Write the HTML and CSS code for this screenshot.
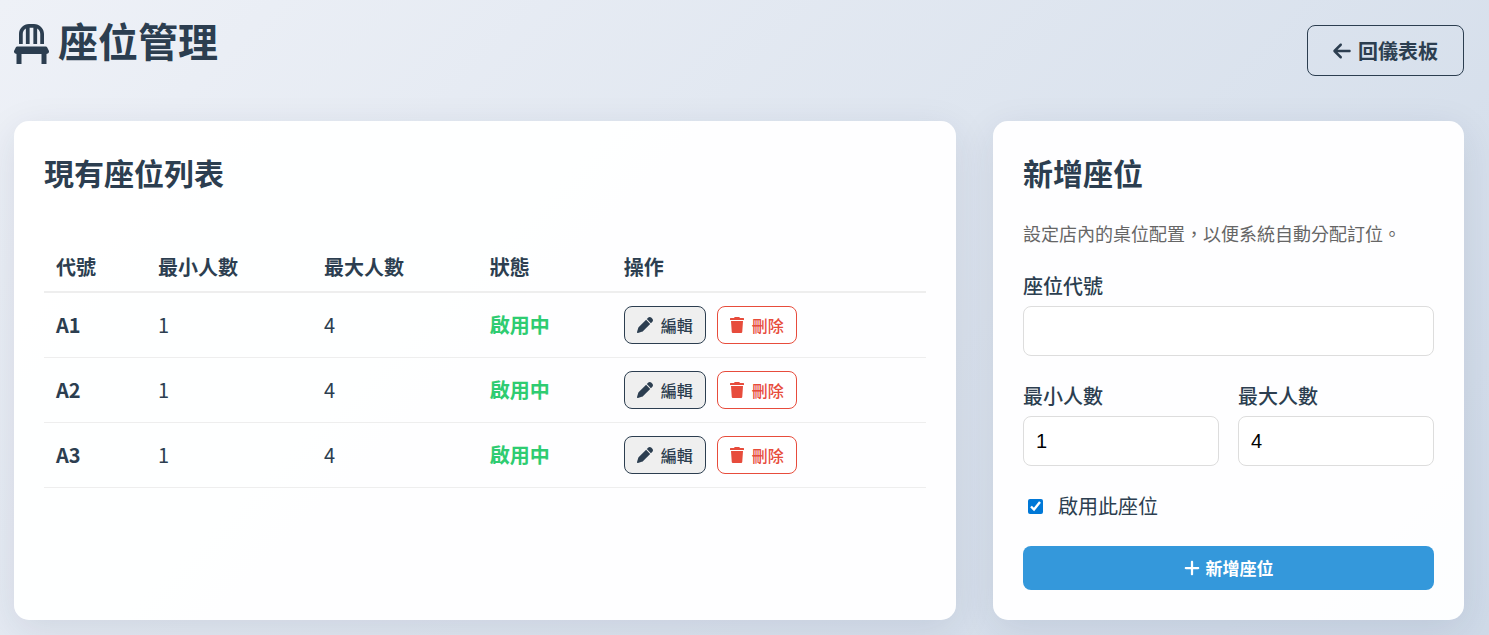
FILE: index.html
```
<!DOCTYPE html>
<html lang="zh-Hant">
<head>
    <meta charset="UTF-8">
    <meta name="viewport" content="width=device-width, initial-scale=1.0">
    <title>座位管理</title>
    <link rel="stylesheet" href="styles.css">
</head>
<body>

<!-- Icons -->
<svg class="icon-defs" aria-hidden="true">
    <symbol id="icon-chair" viewBox="0 0 448 512"><path d="M248 48l0 208 48 0 0-197.3c23.9 13.8 40 39.7 40 69.3l0 128 48 0 0-128C384 57.3 326.7 0 256 0L192 0C121.3 0 64 57.3 64 128l0 128 48 0 0-128c0-29.6 16.1-55.5 40-69.3L152 256l48 0 0-208 48 0zM48 288c-12.1 0-23.2 6.8-28.6 17.7l-16 32c-5 9.9-4.4 21.7 1.4 31.1S20.9 384 32 384l0 128 64 0 0-128 256 0 0 128 64 0 0-128c11.1 0 21.3-5.7 27.2-15.2s6.4-21.2 1.4-31.1l-16-32C423.2 294.8 412.1 288 400 288L48 288z"/></symbol>
    <symbol id="icon-back" viewBox="0 0 448 512"><path d="M9.4 233.4c-12.5 12.5-12.5 32.8 0 45.3l160 160c12.5 12.5 32.8 12.5 45.3 0s12.5-32.8 0-45.3L109.2 288 416 288c17.7 0 32-14.3 32-32s-14.3-32-32-32l-306.7 0L214.6 118.6c12.5-12.5 12.5-32.8 0-45.3s-32.8-12.5-45.3 0l-160 160z"/></symbol>
    <symbol id="icon-pen" viewBox="0 0 512 512"><path d="M362.7 19.3L314.3 67.7 444.3 197.7l48.4-48.4c25-25 25-65.5 0-90.5L453.3 19.3c-25-25-65.5-25-90.5 0zm-71 71L58.6 323.5c-10.4 10.4-18 23.3-22.2 37.4L1 481.2C-1.5 489.7 .8 498.8 7 505s15.3 8.5 23.7 6.1l120.3-35.4c14.1-4.2 27-11.8 37.4-22.2L421.7 220.3 291.7 90.3z"/></symbol>
    <symbol id="icon-trash" viewBox="0 0 448 512"><path d="M135.2 17.7L128 32 16 32C6 32 0 38 0 48L0 96 448 96 448 48c0-10-6-16-16-16L320 32l-7.2-14.3C307.4 6.8 296.3 0 284.2 0L163.8 0c-12.1 0-23.2 6.8-28.6 17.7zM416 128L32 128 56 480c1.6 20 14 32 34 32l268 0c20 0 32.400-12 34-32L416 128z"/></symbol>
    <symbol id="icon-plus" viewBox="0 0 448 512"><path d="M256 80c0-17.7-14.3-32-32-32s-32 14.3-32 32l0 144L48 224c-17.7 0-32 14.3-32 32s14.3 32 32 32l144 0 0 144c0 17.7 14.3 32 32 32s32-14.3 32-32l0-144 144 0c17.7 0 32-14.3 32-32s-14.3-32-32-32l-144 0 0-144z"/></symbol>
</svg>

<header class="page-header">
    <h1><svg class="icon icon-title"><use href="#icon-chair"/></svg>座位管理</h1>
    <a class="btn-back" href="#"><svg class="icon icon-md"><use href="#icon-back"/></svg>回儀表板</a>
</header>

<main class="layout">
    <!-- Seat list -->
    <section class="card">
        <h2>現有座位列表</h2>
        <table>
            <thead>
                <tr>
                    <th>代號</th>
                    <th>最小人數</th>
                    <th>最大人數</th>
                    <th>狀態</th>
                    <th>操作</th>
                </tr>
            </thead>
            <tbody>
                <tr>
                    <td><strong>A1</strong></td>
                    <td>1</td>
                    <td>4</td>
                    <td class="status">啟用中</td>
                    <td>
                        <div class="actions">
                            <button type="button" class="btn-small btn-edit"><svg class="icon icon-pen"><use href="#icon-pen"/></svg>編輯</button>
                            <button type="button" class="btn-small btn-delete"><svg class="icon icon-sm"><use href="#icon-trash"/></svg>刪除</button>
                        </div>
                    </td>
                </tr>
                <tr>
                    <td><strong>A2</strong></td>
                    <td>1</td>
                    <td>4</td>
                    <td class="status">啟用中</td>
                    <td>
                        <div class="actions">
                            <button type="button" class="btn-small btn-edit"><svg class="icon icon-pen"><use href="#icon-pen"/></svg>編輯</button>
                            <button type="button" class="btn-small btn-delete"><svg class="icon icon-sm"><use href="#icon-trash"/></svg>刪除</button>
                        </div>
                    </td>
                </tr>
                <tr>
                    <td><strong>A3</strong></td>
                    <td>1</td>
                    <td>4</td>
                    <td class="status">啟用中</td>
                    <td>
                        <div class="actions">
                            <button type="button" class="btn-small btn-edit"><svg class="icon icon-pen"><use href="#icon-pen"/></svg>編輯</button>
                            <button type="button" class="btn-small btn-delete"><svg class="icon icon-sm"><use href="#icon-trash"/></svg>刪除</button>
                        </div>
                    </td>
                </tr>
            </tbody>
        </table>
    </section>

    <!-- Add seat form -->
    <section class="card">
        <h2>新增座位</h2>
        <p class="hint">設定店內的桌位配置，以便系統自動分配訂位。</p>
        <form onsubmit="return false;">
            <div class="field">
                <label for="seatCode">座位代號</label>
                <input type="text" id="seatCode" required>
            </div>
            <div class="field-row">
                <div class="field">
                    <label for="minPeople">最小人數</label>
                    <input type="number" id="minPeople" value="1" min="1">
                </div>
                <div class="field">
                    <label for="maxPeople">最大人數</label>
                    <input type="number" id="maxPeople" value="4" min="1">
                </div>
            </div>
            <div class="check-row">
                <input type="checkbox" id="seatActive" checked>
                <label for="seatActive">啟用此座位</label>
            </div>
            <button type="submit" class="btn-submit"><svg class="icon icon-plus"><use href="#icon-plus"/></svg>新增座位</button>
        </form>
    </section>
</main>

</body>
</html>
```
FILE: styles.css
```
* {
    box-sizing: border-box;
}

body {
    margin: 0;
    padding: 16px 25px 15px 14px;
    min-height: 100vh;
    font-family: "Noto Sans CJK TC", sans-serif;
    font-size: 20px;
    line-height: 30px;
    color: #2c3e50;
    background: linear-gradient(135deg, #eef1f7 0%, #cfdae8 100%);
}

h1, h2, p {
    margin: 0;
}

.icon-defs {
    display: none;
}

.icon {
    flex: none;
    fill: currentColor;
}

.icon-title {
    width: 35px;
    height: 40px;
}

.icon-md {
    width: 18px;
    height: 20px;
}

.icon-pen {
    width: 16px;
    height: 16px;
}

.icon-sm {
    width: 14px;
    height: 16px;
}

.icon-plus {
    width: 16px;
    height: 18px;
}

.page-header {
    display: flex;
    justify-content: space-between;
    align-items: flex-start;
    margin-bottom: 45px;
}

h1 {
    display: flex;
    align-items: flex-end;
    gap: 9px;
    font-size: 40px;
    line-height: 48px;
}

.btn-back {
    display: flex;
    align-items: center;
    gap: 7px;
    margin-top: 9px;
    padding: 10px 25px;
    border: 1px solid #2c3e50;
    border-radius: 8px;
    color: #2c3e50;
    line-height: 29px;
    font-weight: 600;
    text-decoration: none;
}

.layout {
    display: grid;
    grid-template-columns: 2fr 1fr;
    gap: 37px;
}

.card {
    padding: 30px;
    border-radius: 15px;
    background: rgba(255, 255, 255, 0.96);
    box-shadow: 0 10px 38px rgba(31, 38, 80, 0.1);
}

h2 {
    margin-bottom: 40px;
    font-size: 30px;
    line-height: 42px;
}

/* Table */
table {
    width: 100%;
    border-collapse: collapse;
}

th, td {
    padding: 13px 12px;
    text-align: left;
    vertical-align: baseline;
    white-space: nowrap;
}

th {
    padding: 19px 12px 9px;
    border-bottom: 2px solid #eee;
    font-weight: 600;
}

td {
    border-bottom: 1px solid #eee;
}

.status {
    color: #2ecc71;
    font-weight: 700;
}

.actions {
    display: flex;
    gap: 11px;
}

.btn-small {
    display: flex;
    align-items: center;
    gap: 8px;
    padding: 6px 12px;
    border: 1px solid;
    border-radius: 8px;
    font-family: inherit;
    font-size: 16px;
    line-height: 24px;
    cursor: pointer;
}

.btn-edit {
    border-color: #2c3e50;
    background: #efefef;
    color: #2c3e50;
    font-weight: 500;
}

.btn-delete {
    border-color: #e74c3c;
    background: #fff;
    color: #e74c3c;
    font-weight: 500;
}

/* Form */
.hint {
    margin-bottom: 23px;
    color: #666;
    font-size: 18px;
}

.card h2:has(+ .hint) {
    margin-bottom: 25px;
}

.field {
    flex: 1;
    min-width: 0;
    margin-bottom: 25px;
}

.field label {
    display: block;
    margin-bottom: 5px;
    font-weight: 500;
}

.field input {
    display: block;
    width: 100%;
    height: 50px;
    padding: 12px;
    border: 1px solid #ddd;
    border-radius: 8px;
    background: #fff;
    color: #000;
    font-family: "Liberation Sans", Arial, sans-serif;
    font-size: 20px;
}

.field-row {
    display: flex;
    gap: 19px;
}

.check-row {
    display: flex;
    align-items: center;
    gap: 15px;
    margin-bottom: 25px;
}

.check-row input {
    width: 15px;
    height: 15px;
    margin: 0 0 0 5px;
    accent-color: #0078d7;
}

.btn-submit {
    display: flex;
    justify-content: center;
    align-items: center;
    gap: 6px;
    width: 100%;
    padding: 10px;
    border: none;
    border-radius: 8px;
    background: #3498db;
    color: #fff;
    font-family: inherit;
    font-size: 17px;
    font-weight: 700;
    line-height: 24px;
    cursor: pointer;
}
```
